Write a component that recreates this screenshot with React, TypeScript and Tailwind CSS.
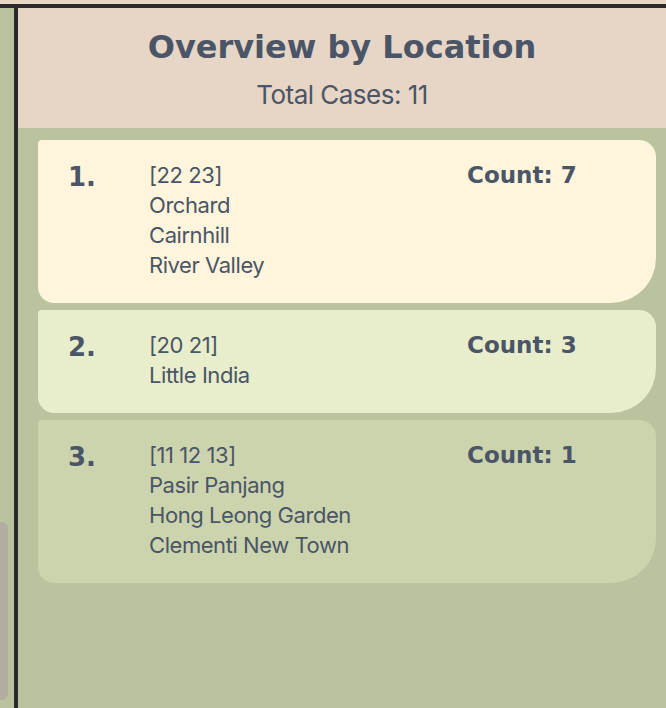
import React from "react";

type Loc = { codes: string; places: string[]; count: number; bg: string };

const locations: Loc[] = [
  { codes: "[22 23]", places: ["Orchard", "Cairnhill", "River Valley"], count: 7, bg: "bg-[#fef5dc]" },
  { codes: "[20 21]", places: ["Little India"], count: 3, bg: "bg-[#e8edcb]" },
  { codes: "[11 12 13]", places: ["Pasir Panjang", "Hong Leong Garden", "Clementi New Town"], count: 1, bg: "bg-[#ccd4ae]" },
];

const bold = "font-['DejaVu_Sans',sans-serif] font-bold";
const body = "font-['Inter',sans-serif] tracking-[-0.02em]";

const LocationCard: React.FC<{ loc: Loc; index: number }> = ({ loc, index }) => {
  return (
    <div
      className={`${loc.bg} flex pl-[30px] pt-[20px] pb-[23px] rounded-tl-[4px] rounded-tr-[17px] rounded-br-[45px] rounded-bl-[16px]`}
    >
      <div className={`${bold} w-[81px] shrink-0 text-[26px] leading-[30px] pt-[2px] text-[#4a5567]`}>{index + 1}.</div>
      <div className={`${body} w-[318px] shrink-0 text-[22px] leading-[30px] text-[#4a5567]`}>
        <div>{loc.codes}</div>
        {loc.places.map((p) => (
          <div key={p}>{p}</div>
        ))}
      </div>
      <div className={`${bold} text-[23px] leading-[30px] text-[#4a5567]`}>Count: {loc.count}</div>
    </div>
  );
};

const App: React.FC = () => {
  return (
    <div className="w-[666px] h-[708px] flex flex-col bg-[#e7d5c6] overflow-hidden">
      <div className="h-[4px] bg-[#e7d5c6]" />
      <div className="h-[4px] bg-[#2b2b2b]" />
      <div className="flex flex-1 min-h-0">
        <div className="w-[14px] bg-[#bac39e] flex flex-col pt-[514px]">
          <div className="w-[8px] h-[178px] bg-[#b3ada1] rounded-r-[6px]" />
        </div>
        <div className="w-[4px] bg-[#2b2b2b]" />
        <div className="flex-1 flex flex-col bg-[#bac39e]">
          <div className="h-[120px] bg-[#e7d5c6] flex flex-col items-center pt-[20px]">
            <h1 className={`${bold} text-[32px] leading-[38px] text-[#4a5567]`}>Overview by Location</h1>
            <p className={`${body} mt-[14px] text-[26px] leading-[30px] text-[#4a5567]`}>Total Cases: 11</p>
          </div>
          <div className="flex flex-col gap-[7px] pt-[12px] pl-[20px] pr-[10px]">
            {locations.map((loc, i) => (
              <LocationCard key={loc.codes} loc={loc} index={i} />
            ))}
          </div>
        </div>
      </div>
    </div>
  );
};

export default App;
